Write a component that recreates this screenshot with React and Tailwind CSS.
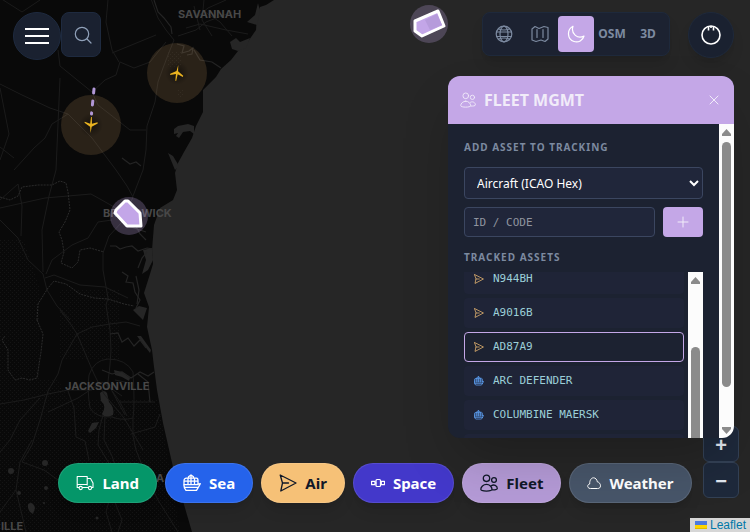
import { useState } from "react"

const roads = [
  "M0 84 L22 95 L50 108 L68 114 L92 138 L116 170",
  "M22 12 L0 -2 M22 12 L40 0 M58 50 L60 66 L92 92 L98 105 L130 130 L146 130",
  "M150 -4 L158 18 L166 30 L174 40 L168 55 L163 68 L158 82 L155 102 L147 126 L146 150 L143 170 L133 196",
  "M92 92 L105 80 L116 75 L120 62 L134 68 L150 62 L166 42",
  "M108 0 L106 22 L112 50 L119 62 M112 53 L134 44 L156 35",
  "M14 170 L34 148 L45 138 L52 124 L68 114",
  "M60 78 L56 170 M0 147 L14 158 M0 88 L9 134 L0 160",
  "M0 208 L45 198 L91 194 L116 208",
  "M0 220 L18 238 L28 260 L43 274 L47 290 L57 306 L70 320",
  "M56 170 L49 196 L42 230 L43 272 M0 200 L18 184 L22 206 L21 236",
  "M116 170 L127 186 L133 197 L122 222 L109 236 L103 253 L103 270 L108 298 L106 305 L110 330 L111 350 L110 365 L107 390",
  "M45 278 L54 275 L80 285 L105 287 L128 298",
  "M46 274 L52 260 L72 245 L88 238 L98 222 L112 220",
  "M60 310 L72 326 L77 334 L88 360 L94 374 L104 394 L124 418 L130 428 L143 450",
  "M77 334 L92 327 L110 324 L126 322 L140 326",
  "M77 334 L62 360 L58 374 L48 391 L40 420 L32 445 L22 462",
  "M0 404 L24 400 L48 394 L68 390 L92 390",
  "M68 391 L74 408 L76 437 L85 441 L89 460",
  "M48 412 L78 398 L102 382 L122 396",
  "M89 375 Q94 360 108 359 Q126 359 133 372 Q135 404 133 418 Q122 421 112 417 Q96 418 90 408 Q87 390 89 375",
  "M112 391 L125 415 M108 385 L120 402 L127 416 M119 402 L155 402 M115 380 L134 384",
  "M103 415 L99 430 L98 445 L110 465 L112 490 L106 512 L112 532",
  "M105 416 L104 440 L112 456 L120 480 L114 500 L122 520 L118 532",
  "M133 418 L133 436 L136 450 L146 475 L158 500 L178 532",
  "M131 434 L155 427 L160 414 M40 398 L20 420 L10 440 L0 452",
  "M32 440 L20 462 L16 490 L0 512 M16 490 L26 532 M22 462 L44 470 L58 480",
  "M196 18 L208 8 L226 0 M186 28 L200 24 L226 30 L248 34 M204 0 L202 20 L212 36 M178 36 L196 30 L206 22 L232 12",
  "M205 12 L220 22 L232 36 M194 6 L200 30",
]

const rivers = [
  "M154 0 L158 12 L164 18 L171 27 L172 34",
  "M177 44 L184 46 L182 53 L189 51 L193 48 L192 54 L187 55 M194 50 L200 60 L212 62 L221 68",
  "M110 246 L116 246 L120 249 L126 247 L132 246 L138 251 L147 248 L153 249",
  "M122 272 L128 276 L126 282 L133 283 L135 292 L140 300 L136 308",
  "M138 268 L142 258 L147 252 M136 276 L139 290 L137 304 M133 220 L140 234 L146 240 M128 226 L146 232",
  "M110 334 L118 333 L122 342 L128 338 L134 346 L140 340 L146 348",
  "M102 370 L112 374 L122 372 L131 378 L140 372 L148 376 L154 372",
  "M122 158 L130 164 L136 162 L141 166 M138 374 L148 382 L150 402",
]

const borders = [
  "M0 197 L10 200 L18 196 L22 187 L38 185 L52 185 L60 181 L66 183 L68 192 L70 210 L65 222 L59 232 L62 240 L64 252 L61 263 L72 268 L78 262 L80 250 L90 248 L104 252",
  "M37 320 L38 304 L48 288 L54 281 L66 284 L80 294 L94 298 L108 299 L124 304 L134 306",
  "M37 320 L43 334 L41 352 L37 378 L30 380 L22 378 L15 380 L8 370 L8 350 L2 340 L5 336",
]

const cities = [
  { name: "SAVANNAH", x: 178, y: 18 },
  { name: "BRUNSWICK", x: 103, y: 217 },
  { name: "JACKSONVILLE", x: 65, y: 390 },
  { name: "A", x: 156, y: 482 },
  { name: "ILLE", x: 1, y: 530 },
]

const planePath = "M0-8L.8-1.800 6.600 1.800 6.400 3 .9 1.200.4 8h-.8L-.9 1.200-6.400 3-6.600 1.800-.8-1.800z"

const planes = [
  { x: 91, y: 125, heading: 183 },
  { x: 177, y: 73, heading: 9 },
]

const Map = () => (
  <svg
    className="absolute inset-0 h-full w-full font-['Inter',sans-serif]"
    viewBox="0 0 750 532"
    preserveAspectRatio="xMinYMin slice"
    aria-label="Map"
  >
    <defs>
      <pattern id="swamp" width="4" height="4" patternUnits="userSpaceOnUse">
        <path d="M0 0h1v1H0zM2 2h1v1H2z" fill="#141414" />
      </pattern>
      <radialGradient id="shade">
        <stop offset="0" stopColor="#000" stopOpacity="0.5" />
        <stop offset="1" stopColor="#000" stopOpacity="0" />
      </radialGradient>
    </defs>
    <rect width="750" height="532" fill="#262626" />
    <path
      id="land"
      d="M0 0H274L266 5 260 7 257 15 256 30 247 43 238 51 231 60 221 69 216 77 203 90 203 112 196 126 192 138 184 152 178 163 175 173 177 190 173 200 160 208 154 225 152 250 153 264 150 274 144 293 149 307 147 327 152 350 154 367 157 390 163 423 173 467 192 532H0Z"
      fill="#090909"
    />
    <path d="M0 240H24L40 290V380H58L80 420 60 460 20 480H0Z M60 290H120V360H60Z M80 400H158L180 532H0V450Z M168 52H182V68H168Z M177 90H183V98H177Z" fill="url(#swamp)" />
    {/* Inland water */}
    <g fill="#262626">
      <path d="M230 42l6-4 4 4 10-4-4 10-8 3-6-2zM247 22l8-7 3-12 2 8-3 14zM174 129l4-3 10-2 6 2v8l-4-3-7 1-4 6-3-2 2-3-4 1zM168 153l5 3 6 10-4 4z" />
      <path d="M100 393q4-4 7 0l2 9q6 6 4 13-8 4-11-1 5-8-1-13zM88 431l4-8 7-1-3 6-6 5zM114 370l8 2 8 6-1 3-7-4-7-2zM137 336l4 0 10 14-1 3z" />
      <path d="M133 310l6-4 8 2-4 12-4-4zM143 250l9-2 1 12-5 10-6 4 4-14z" />
      <path d="M28 504q5-3 7 4l-2 6q-6-3-5-10z" />
      <circle cx="11" cy="471" r="3" />
      <circle cx="45" cy="463" r="3" />
      <circle cx="19" cy="493" r="2" />
      <circle cx="46" cy="488" r="2" />
      <circle cx="44" cy="503" r="1" />
      <circle cx="97" cy="518" r="1.500" />
    </g>
    <g fill="none" stroke="#1b1b1b" strokeWidth="1">
      {roads.map((d) => (
        <path key={d} d={d} />
      ))}
    </g>
    <g fill="none" stroke="#242424" strokeWidth="1.200">
      {rivers.map((d) => (
        <path key={d} d={d} />
      ))}
    </g>
    <g fill="none" stroke="#2b2b2b" strokeDasharray="2 1">
      {borders.map((d) => (
        <path key={d} d={d} />
      ))}
    </g>
    <g fill="#484848" fontSize="11" fontWeight="700">
      {cities.map((city) => (
        <text key={city.name} x={city.x} y={city.y}>
          {city.name}
        </text>
      ))}
    </g>

    {/* Aircraft */}
    {planes.map((plane) => (
      <g key={plane.x} transform={`translate(${plane.x} ${plane.y})`}>
        <circle r="30" fill="#f6c177" fillOpacity="0.14" />
        <circle r="12" fill="url(#shade)" />
        <path transform={`rotate(${plane.heading})`} d={planePath} fill="#eab320" />
      </g>
    ))}
    <path d="M94 89L91.500 114" stroke="#b197d6" strokeWidth="3" strokeDasharray="4 8" strokeLinecap="round" />

    {/* Vessels */}
    <g stroke="#fff" strokeWidth="3" strokeLinejoin="round">
      <circle cx="129" cy="216" r="19" fill="#c3a6e8" fillOpacity="0.25" stroke="none" />
      <path d="M125 201L116 210 115 213 127 226 141 226 140 213 128 201Z" fill="#c3a6e8" />
      <circle cx="429" cy="24" r="19" fill="#c3a6e8" fillOpacity="0.25" stroke="none" />
      <path d="M415 21L438 11 444 26 422 36 415 31Z" fill="#c3a6e8" />
      <path d="M425 20L437 14 442 25 430 30Z" fill="#b69bdb" stroke="none" />
    </g>
  </svg>
)

const Icon = ({ className, children, box = 24, weight = 1.5 }) => (
  <svg
    viewBox={`0 0 ${box} ${box}`}
    className={className}
    fill="none"
    stroke="currentColor"
    strokeWidth={weight}
    strokeLinecap="round"
    strokeLinejoin="round"
    aria-hidden="true"
  >
    {children}
  </svg>
)

const MenuIcon = ({ className }) => (
  <Icon className={className} weight={2}>
    <path d="M0 5h24M0 12h24M0 19h24" strokeLinecap="butt" />
  </Icon>
)

const SearchIcon = ({ className }) => (
  <Icon className={className} box={18} weight={1.2}>
    <circle cx="8" cy="8" r="6.700" />
    <path d="M13 13l4 4" />
  </Icon>
)

const GlobeIcon = ({ className }) => (
  <Icon className={className} box={18} weight={1.2}>
    <circle cx="9" cy="9" r="7.800" />
    <ellipse cx="9" cy="9" rx="4" ry="7.800" />
    <path d="M1.500 7h15M1.500 11.500h15M3.500 4q5.500 2 11 0M3.500 14q5.500-2 11 0" />
  </Icon>
)

const MapIcon = ({ className }) => (
  <Icon className={className} box={18} weight={1.2}>
    <path d="M1 4l3-2.500 4 2 5-2 4 1V14l-3 2.500-4-1.500-5 1.500L1 15zM6 4.500v8M12 4.500v8" />
  </Icon>
)

const MoonIcon = ({ className }) => (
  <Icon className={className} box={18} weight={1.2}>
    <path d="M6 1.200C-.5 4.500.2 14.500 7 16.500c4.500 1.300 8.800-1 10-5.500C11 14.500 3.500 9 6 1.200z" />
  </Icon>
)

const PowerIcon = ({ className }) => (
  <Icon className={className} box={20} weight={1.6}>
    <circle cx="10" cy="10" r="9" />
    <path d="M7.500 1.500v4M12.500 1.500v4M10 1v2" strokeLinecap="butt" />
  </Icon>
)

const FleetIcon = ({ className, weight = 1.3 }) => (
  <Icon className={className} box={18} weight={weight}>
    <circle cx="6.500" cy="4.300" r="3.200" />
    <circle cx="14" cy="6" r="2.400" />
    <path d="M6.500 10.300c-3.200 0-5.700 2.700-5.700 5 0 2.300 11.200 2.300 11.200 0 0-2.300-2.300-5-5.500-5zM11.300 11.800c2.500-1.800 6-.4 6 2.800 0 1-2.500 1.400-5.300 1.200" />
  </Icon>
)

const TruckIcon = ({ className }) => (
  <Icon className={className} box={18} weight={1.1}>
    <path d="M3 13.500H1.200v-11h10v8.500M1.200 10.500h10M11.200 4.500h3.300l2.500 4.500v4.500h-1.500M12.500 13.500h-6" />
    <circle cx="4.700" cy="14" r="1.600" />
    <circle cx="14" cy="14" r="1.600" />
  </Icon>
)

const ShipIcon = ({ className }) => (
  <Icon className={className} box={18} weight={1.3}>
    <path d="M5 4.200h8.500q1.500 0 1.500 2.500v4M5 4.200H3.500Q1 4.200 1 7v4M5.500 4V2.800L8 1l2.500 1.800V4M8 1v9.500M1.200 7.200h13.600M5 4.200v6.500M11.500 4.200v6.500M.8 10.700h12.500l4-1-2 3.800M.8 10.700L1.500 14M2 13.300h13M1.500 14l1.500 2.300h10.500l1.800-3" />
  </Icon>
)

const AirIcon = ({ className }) => (
  <Icon className={className} box={18} weight={1.3}>
    <path d="M1.200 1L17 9 1.800 17 3.500 9zM3.500 9h6" />
  </Icon>
)

const SatelliteIcon = ({ className }) => (
  <Icon className={className} box={14} weight={1.2}>
    <rect x="5" y="3.500" width="4.500" height="7" rx="1" />
    <path d="M5 7H4M9.500 7h.8M.6 5.300H4v3.400H.6zM10.300 5.300h3.200v3.400h-3.200z" />
  </Icon>
)

const CloudIcon = ({ className }) => (
  <Icon className={className} box={14} weight={1}>
    <path d="M3 12.500C0 12.500-.1 8.300 2.700 8 2.500 4 4.500 1.800 6.500 1.800S10 3.500 10.300 5.800c2 .4 3.200 2.200 3.200 4 0 1.700-1 2.700-2.500 2.700z" />
  </Icon>
)

const PlusIcon = ({ className }) => (
  <Icon className={className} box={12} weight={1}>
    <path d="M6 1v10M1 6h10" />
  </Icon>
)

const CloseIcon = ({ className }) => (
  <Icon className={className} box={10} weight={1}>
    <path d="M1 1l8 8M9 1L1 9" />
  </Icon>
)

const assets = [
  { id: "N944BH", type: "air" },
  { id: "A9016B", type: "air" },
  { id: "AD87A9", type: "air" },
  { id: "ARC DEFENDER", type: "sea" },
  { id: "COLUMBINE MAERSK", type: "sea" },
]

const layers = [
  { name: "Land", icon: TruckIcon, size: "size-[18px]", style: "bg-[#059669] text-white" },
  { name: "Sea", icon: ShipIcon, size: "size-[18px]", style: "bg-[#2563eb] text-white" },
  { name: "Air", icon: AirIcon, size: "size-[18px]", style: "bg-[#f6c177] text-gray-900" },
  { name: "Space", icon: SatelliteIcon, size: "size-3.5", style: "bg-[#4338ca] text-white" },
  { name: "Fleet", icon: FleetIcon, size: "size-[18px]", style: "bg-[#b49ad6] text-gray-900" },
  { name: "Weather", icon: CloudIcon, size: "size-3.5", style: "bg-[#475569] text-white" },
]

const Arrow = ({ className }) => (
  <svg viewBox="0 0 9 7" className={className} aria-hidden="true">
    <path d="M4.500 0L9 5V7H0V5z" fill="#8b8b8b" />
  </svg>
)

const TopBar = () => {
  const [view, setView] = useState("dark")
  const views = [
    { id: "globe", icon: GlobeIcon },
    { id: "map", icon: MapIcon },
    { id: "dark", icon: MoonIcon },
  ]

  return (
    <header className="flex items-start pt-3 pr-4 pl-[13px]">
      <button aria-label="Menu" className="flex size-12 items-center justify-center rounded-full border border-[#1e2a3f] bg-[#1a2130] text-white">
        <MenuIcon className="size-6" />
      </button>
      <button aria-label="Search" className="flex h-[45px] w-10 items-center justify-center rounded-lg border border-[#1e2a3f] bg-[#1a2130] pl-1 text-slate-400">
        <SearchIcon className="size-[18px]" />
      </button>
      <div className="ml-auto flex rounded-lg border border-[#1e293b] bg-[#1c2231] p-[3px] text-[#7c8aa0] shadow-lg">
        {views.map((item) => (
          <button
            key={item.id}
            aria-label={item.id}
            onClick={() => setView(item.id)}
            className={`flex size-9 items-center justify-center rounded ${view === item.id ? "bg-[#c4a7e7] text-white" : ""}`}
          >
            <item.icon className="size-[18px]" />
          </button>
        ))}
        <button className="w-9 text-xs font-bold">OSM</button>
        <button className="w-9 text-xs font-bold">3D</button>
      </div>
      <button aria-label="Power" className="ml-[18px] flex size-[46px] items-center justify-center rounded-full border border-[#1e293b] bg-[#1a2130] text-white shadow-lg">
        <PowerIcon className="size-5" />
      </button>
    </header>
  )
}

const FleetPanel = () => {
  const [selected, setSelected] = useState("AD87A9")

  return (
    <aside className="relative z-10 mt-4 mr-4 flex min-h-0 w-[286px] flex-1 flex-col self-end overflow-hidden rounded-xl bg-[#1c2231] shadow-2xl">
      <div className="flex h-12 shrink-0 items-center bg-[#c4a7e7] px-3 text-[#f1ecf9]">
        <FleetIcon className="size-4" weight={1} />
        <h2 className="ml-2 flex-1 text-base font-bold">FLEET MGMT</h2>
        <button aria-label="Close" className="p-[3px]">
          <CloseIcon className="size-2.5" />
        </button>
      </div>

      <div className="flex min-h-0 flex-1">
        <div className="flex min-h-0 min-w-0 flex-1 flex-col px-4 pt-[15px]">
          <label htmlFor="asset-type" className="text-[10px] leading-4 font-bold tracking-widest text-[#7c8aa0]">
            ADD ASSET TO TRACKING
          </label>
          <select
            id="asset-type"
            className="mt-3 h-8 w-full shrink-0 rounded border border-[#3b4660] bg-[#20263a] px-2 text-xs text-white"
          >
            <option>Aircraft (ICAO Hex)</option>
            <option>Vessel (MMSI)</option>
          </select>
          <div className="mt-2 flex shrink-0 gap-2">
            <input
              aria-label="ID / CODE"
              placeholder="ID / CODE"
              className="h-[30px] min-w-0 flex-1 rounded border border-[#3b4660] bg-[#20263a] px-2 font-['DejaVu_Sans_Mono',monospace] text-[11px] text-white placeholder:text-[#8f949f]"
            />
            <button aria-label="Add asset" className="flex w-10 items-center justify-center rounded bg-[#c4a7e7] text-[#f1ecf9]">
              <PlusIcon className="size-3" />
            </button>
          </div>
          <h3 className="mt-3 text-[10px] leading-4 font-bold tracking-widest text-[#7c8aa0]">TRACKED ASSETS</h3>

          <div className="mt-[7px] flex min-h-0 flex-1 gap-1 overflow-hidden">
            <ul className="-mt-2 flex flex-1 flex-col gap-1">
              {assets.map((asset) => (
                <li key={asset.id}>
                  <button
                    onClick={() => setSelected(asset.id)}
                    className={`flex h-[30px] w-full items-center gap-[9px] rounded border px-[9px] font-['DejaVu_Sans_Mono',monospace] text-[11px] leading-[18px] text-[#9ccfd8] ${
                      selected === asset.id ? "border-[#c4a7e7]" : "border-transparent bg-[#1f2437]"
                    }`}
                  >
                    {asset.type === "air" ? (
                      <AirIcon className="size-2.5 text-[#f6c177]" />
                    ) : (
                      <ShipIcon className="size-2.5 text-[#60a5fa]" />
                    )}
                    {asset.id}
                  </button>
                </li>
              ))}
              <li className="h-[30px] shrink-0 rounded bg-[#1f2437]" />
            </ul>
            <div className="flex w-[15px] flex-col items-center gap-[63px] bg-[#fcfcfc] pt-[5px]">
              <Arrow className="h-[7px] w-[9px] shrink-0" />
              <div className="w-[9px] flex-1 rounded-t-full bg-[#8b8b8b]" />
            </div>
          </div>
        </div>

        <div className="flex w-[15px] flex-col items-center bg-[#fcfcfc] pt-[5px] pb-1">
          <Arrow className="h-[7px] w-[9px] shrink-0" />
          <div className="mt-1.5 mb-10 w-[9px] flex-1 rounded-full bg-[#8b8b8b]" />
          <Arrow className="h-[7px] w-[9px] shrink-0 rotate-180" />
        </div>
      </div>
    </aside>
  )
}

const App = () => {
  return (
    <div className="relative flex h-screen flex-col overflow-hidden bg-[#262626] font-['Noto_Sans',sans-serif]">
      <Map />
      <div className="relative flex min-h-0 flex-1 flex-col">
        <TopBar />
        <FleetPanel />

        {/* Layer toggles */}
        <nav className="mt-[25px] mb-[29px] flex justify-center gap-2">
          {layers.map((layer) => (
            <button
              key={layer.name}
              className={`flex h-10 items-center gap-2 rounded-full border border-white/10 px-[17px] text-[15px] font-bold shadow-lg ${layer.style}`}
            >
              <layer.icon className={layer.size} />
              {layer.name}
            </button>
          ))}
        </nav>

        {/* Zoom controls */}
        <div className="absolute right-[11px] bottom-[34px] flex flex-col font-['Liberation_Sans',sans-serif] text-xl font-bold text-slate-200">
          <button aria-label="Zoom in" className="size-9 rounded-md border border-[#334155] bg-[#1e293b] pt-0.5">
            +
          </button>
          <button aria-label="Zoom out" className="size-9 rounded-md border border-[#334155] bg-[#1e293b] pt-0.5">
            −
          </button>
        </div>
      </div>

      <a
        href="https://leafletjs.com"
        className="absolute right-0 bottom-0 flex items-center gap-[3px] bg-[#d6d6d6] pr-1 pl-[5px] font-['Liberation_Sans',sans-serif] text-xs leading-[14px] text-[#0078a8]"
      >
        <svg viewBox="0 0 12 8" className="h-2 w-3" aria-hidden="true">
          <path d="M0 0h12v4H0z" fill="#4c7be1" />
          <path d="M0 4h12v3H0z" fill="#ffd500" />
          <path d="M0 7h12v1H0z" fill="#e0bc00" />
        </svg>
        Leaflet
      </a>
    </div>
  )
}

export default App
